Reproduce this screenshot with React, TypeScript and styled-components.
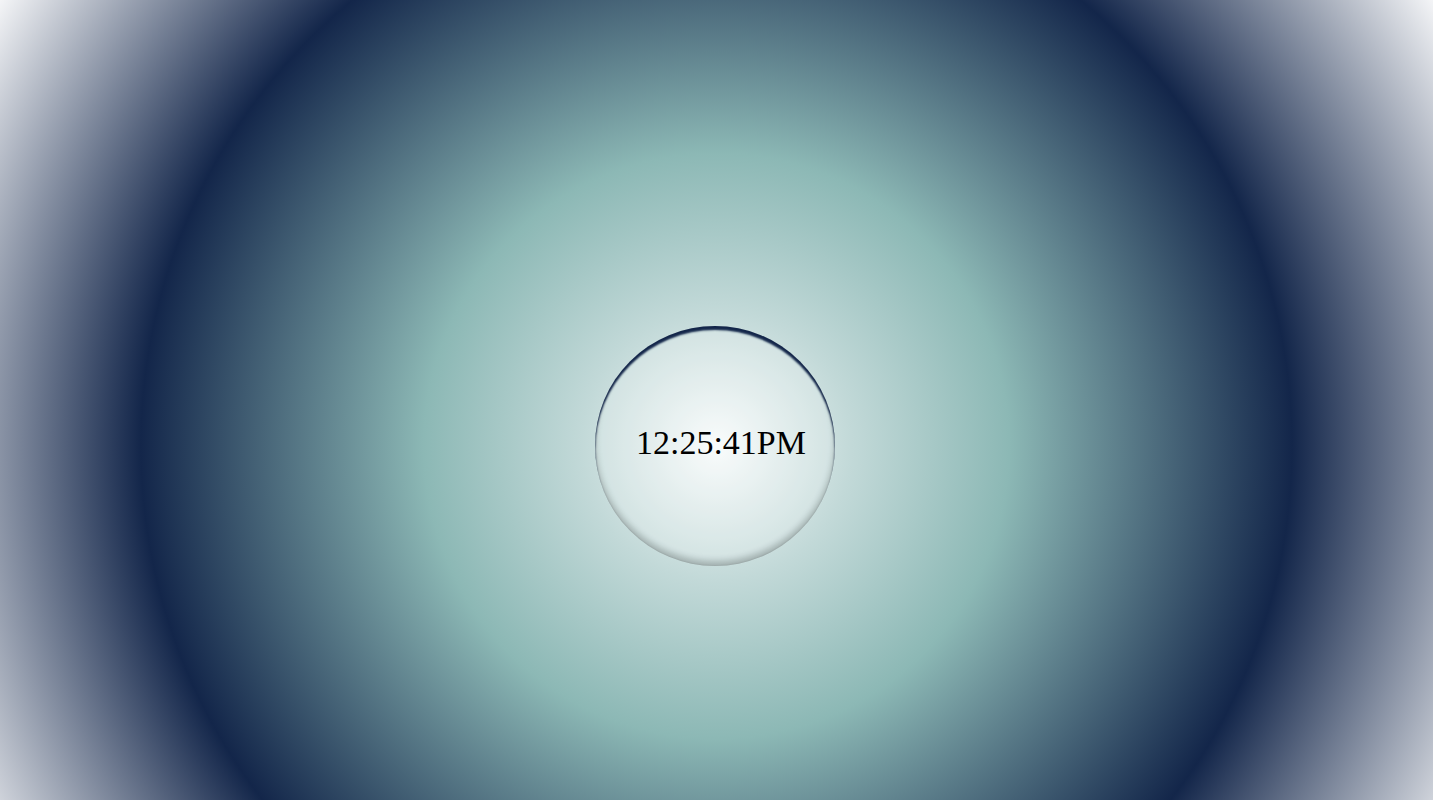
import React from "react";
import styled, { createGlobalStyle } from "styled-components";

const GlobalStyle = createGlobalStyle`
  html, body {
    margin: 0;
    padding: 0;
    height: 100%;
    overflow: hidden;
  }
  body {
    font-family: "Liberation Serif", "Times New Roman", serif;
  }
`;

const Page = styled.main`
  box-sizing: border-box;
  width: 100%;
  height: 100vh;
  padding: 92px 3px 0 0;
  display: flex;
  align-items: center;
  justify-content: center;
  background: radial-gradient(
    circle farthest-corner at 50% 446px,
    #f8fbfb 0%,
    #c2d9d8 16%,
    #8cb8b5 34.7%,
    #13264a 68.2%,
    #f4f5f7 100%
  );
`;

const Clock = styled.div`
  box-sizing: border-box;
  width: 240px;
  height: 240px;
  border-radius: 50%;
  padding: 0 0 7px 12px;
  display: flex;
  align-items: center;
  justify-content: center;
  background: rgba(255, 255, 255, 0.18);
  box-shadow: inset 0 4px 2px #13264a, inset 0 -5px 6px rgba(0, 0, 0, 0.22),
    inset 0 0 2px rgba(0, 0, 0, 0.18);
`;

const Time = styled.span`
  font-family: "Liberation Serif", "Times New Roman", serif;
  font-size: 34px;
  color: #000;
  white-space: nowrap;
`;

export default function App() {
  return (
    <>
      <GlobalStyle />
      <Page>
        <Clock>
          <Time>12:25:41PM</Time>
        </Clock>
      </Page>
    </>
  );
}
